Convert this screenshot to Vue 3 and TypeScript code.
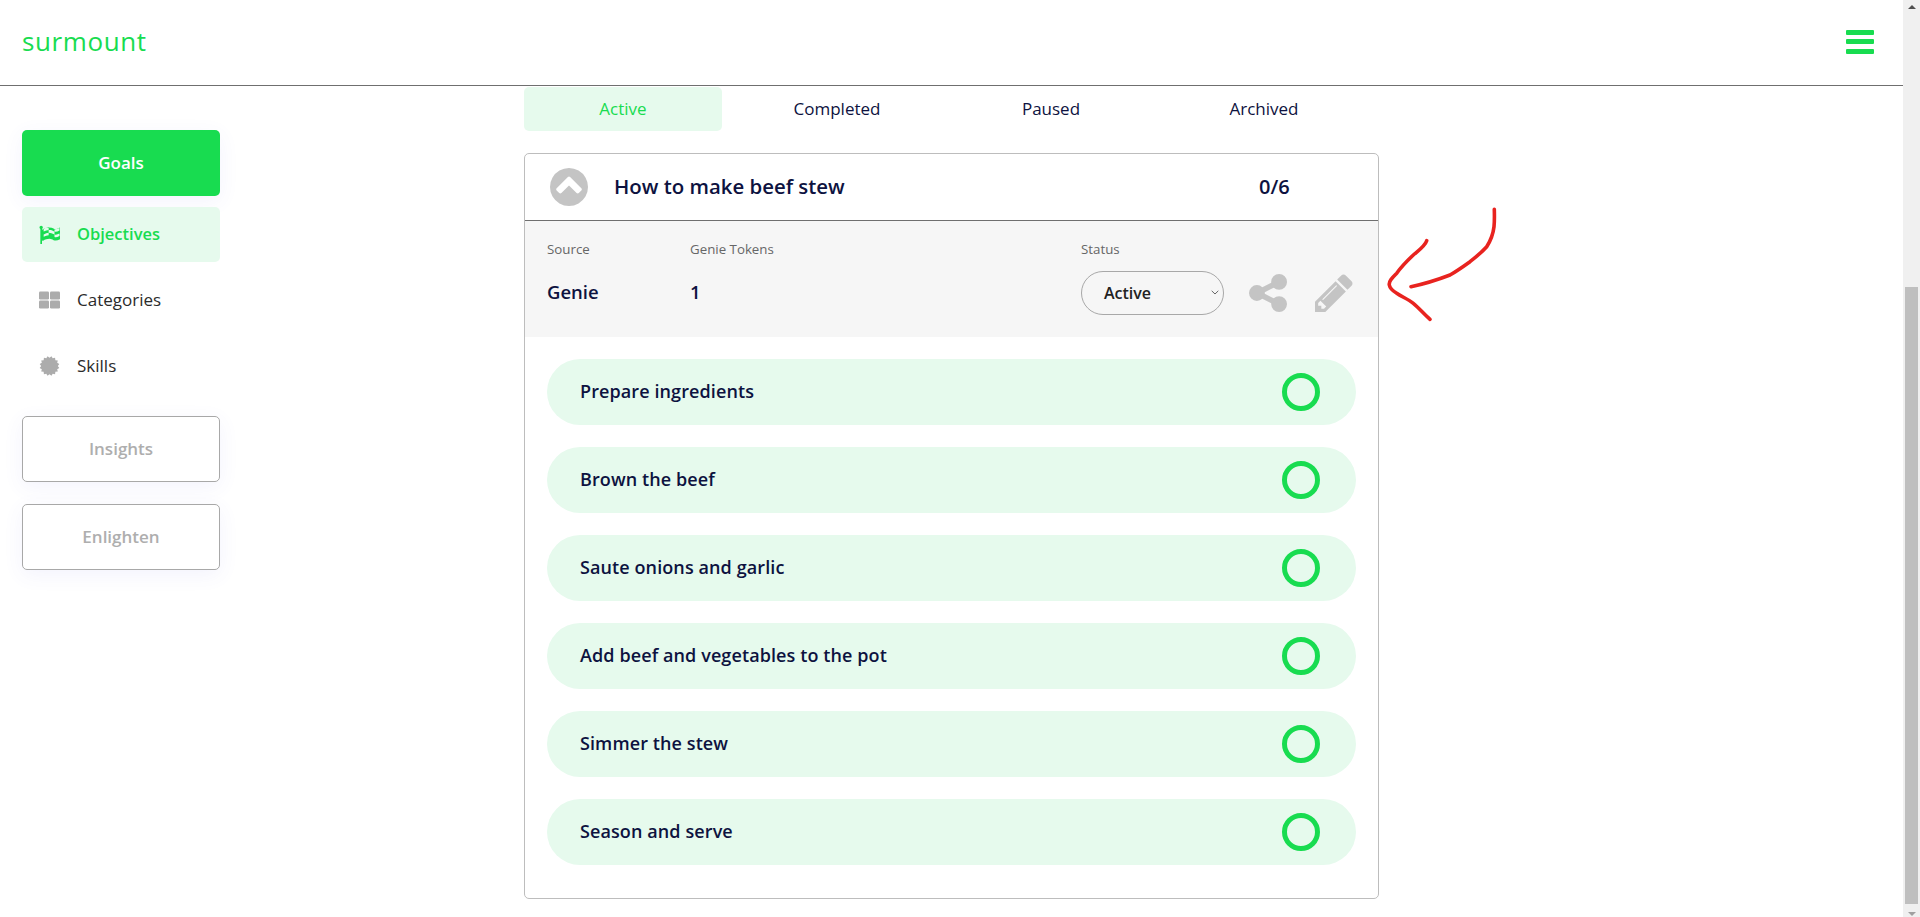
<template>
  <div class="page">
    <div class="content">
      <header class="topbar">
        <span class="logo">surmount</span>
        <div class="burger"><i></i><i></i><i></i></div>
      </header>
      <div class="body">
        <nav class="sidebar">
          <div class="nav-btn nav-solid">Goals</div>
          <div class="nav-item nav-item-active">
            <svg class="nav-icon" viewBox="128 128 1536 1536">
              <path d="M832 1000v-192q-181 16-384 117v185q205-96 384-110zm0-418v-197q-172 8-384 126v189q215-111 384-118zm832 463v-184q-235 116-384 71v-224q-20-6-39-15-5-3-33-17t-34.5-17-31.5-15-34.5-15.5-32.5-13-36-12.5-35-8.5-39.5-7.5-39.5-4-44-2q-23 0-49 3v222h19q102 0 192.5 29t197.5 82q19 9 39 15v188q42 17 91 17 120 0 293-92zm0-427v-189q-169 91-306 91-45 0-78-8v196q148 42 384-90zm-1280-224q0 35-17 64t-47 47v1266q0 14-9 23t-23 9h-64q-14 0-23-9t-9-23v-1266q-30-18-47-47t-17-64q0-53 37.5-90.5t90.5-37.5 90.5 37.5 37.5 90.5zm1408 64v763q0 39-35 57-10 5-17 9-218 116-369 116-88 0-158-35l-28-14q-64-33-99-48t-91-29-114-14q-102 0-235.5 44t-228.5 102q-15 9-33 9-16 0-32-8-32-19-32-56v-742q0-35 31-55 35-21 78.5-42.5t114-52 152.5-49.5 155-19q112 0 209 31t209 86q38 19 89 19 122 0 310-112 22-12 31-17 31-16 62 2 31 20 31 55z" />
            </svg>
            <span>Objectives</span>
          </div>
          <div class="nav-item">
            <svg class="nav-icon" viewBox="0 0 21 17">
              <rect x="0" y="0" width="10" height="8" rx="1.2" />
              <rect x="11" y="0" width="10" height="8" rx="1.2" />
              <rect x="0" y="9" width="10" height="8" rx="1.2" />
              <rect x="11" y="9" width="10" height="8" rx="1.2" />
            </svg>
            <span>Categories</span>
          </div>
          <div class="nav-item nav-item-last">
            <svg class="nav-icon" viewBox="0 0 20 20">
              <polygon :points="badge" />
            </svg>
            <span>Skills</span>
          </div>
          <div class="nav-btn nav-outline">Insights</div>
          <div class="nav-btn nav-outline">Enlighten</div>
        </nav>

        <main class="main">
          <div class="tabs">
            <div v-for="(tab, i) in tabs" :key="tab" class="tab" :class="{ 'tab-active': i === 0 }">{{ tab }}</div>
          </div>

          <section class="card">
            <div class="card-head">
              <svg class="collapse" viewBox="128 128 1536 1536">
                <path d="M1293 1139l102-102q19-19 19-45t-19-45l-454-454q-19-19-45-19t-45 19l-454 454q-19 19-19 45t19 45l102 102q19 19 45 19t45-19l307-307 307 307q19 19 45 19t45-19zm371-243q0 209-103 385.5t-279.5 279.5-385.5 103-385.5-103-279.5-279.5-103-385.5 103-385.5 279.5-279.5 385.5-103 385.5 103 279.5 279.5 103 385.5z" />
              </svg>
              <h2 class="goal-title">How to make beef stew</h2>
              <span class="goal-count">0/6</span>
            </div>

            <div class="meta">
              <div class="meta-col meta-source">
                <span class="meta-label">Source</span>
                <span class="meta-value">Genie</span>
              </div>
              <div class="meta-col meta-tokens">
                <span class="meta-label">Genie Tokens</span>
                <span class="meta-value">1</span>
              </div>
              <div class="meta-col meta-status">
                <span class="meta-label">Status</span>
                <div class="select">
                  <span>Active</span>
                  <svg class="select-caret" viewBox="0 0 8 5"><path d="M.7.8 4 4l3.3-3.2" fill="none" stroke="#666" stroke-width="1" /></svg>
                </div>
              </div>
              <svg class="act-icon share" viewBox="128 128 1536 1536">
                <path d="M1344 1024q133 0 226.5 93.5t93.5 226.5-93.5 226.5-226.5 93.5-226.5-93.5-93.5-226.5q0-12 2-34l-360-180q-92 86-218 86-133 0-226.5-93.5t-93.5-226.5 93.5-226.5 226.5-93.5q126 0 218 86l360-180q-2-22-2-34 0-133 93.5-226.5t226.5-93.5 226.5 93.5 93.5 226.5-93.5 226.5-226.5 93.5q-126 0-218-86l-360 180q2 22 2 34t-2 34l360 180q92-86 218-86z" />
              </svg>
              <svg class="act-icon" viewBox="128 128 1536 1536">
                <path d="M491 1536l91-91-235-235-91 91v107h128v128h107zm523-928q0-22-22-22-10 0-17 7l-542 542q-7 7-7 17 0 22 22 22 10 0 17-7l542-542q7-7 7-17zm-54-192l416 416-832 832h-416v-416zm683 96q0 53-37 90l-166 166-416-416 166-165q36-38 90-38 53 0 91 38l235 234q37 39 37 91z" />
              </svg>
            </div>

            <ul class="steps">
              <li v-for="step in steps" :key="step" class="step">
                <span class="step-text">{{ step }}</span>
                <span class="step-ring"></span>
              </li>
            </ul>
          </section>
        </main>
      </div>
    </div>

    <div class="scrollbar">
      <span class="sb-arrow sb-up"></span>
      <div class="sb-track"><div class="sb-thumb"></div></div>
      <span class="sb-arrow sb-down"></span>
    </div>

    <!-- hand-drawn annotation on top of the screenshot -->
    <svg class="scribble" viewBox="0 0 108 116">
      <path d="M105.3 1.3C105.5 8 105.6 13 105 18.7 104 27 102 32 97.7 38.7 92 45 87 49 81 53.7 75 58 68 63 61 67 48 72 35 76 22 78.7" />
      <path d="M37.7 32.7C36 38 30 42 24.3 47 18 53 12 59 7.7 65.3 4 69 -.5 73 .3 77 1 81 4 83 7.7 85.3 13 89 19 91 24.3 95.3 30 100 35 106 41 111.3" />
    </svg>
  </div>
</template>

<script setup lang="ts">
const tabs = ['Active', 'Completed', 'Paused', 'Archived'];

const steps = [
  'Prepare ingredients',
  'Brown the beef',
  'Saute onions and garlic',
  'Add beef and vegetables to the pot',
  'Simmer the stew',
  'Season and serve',
];

// certificate badge: a small serrated disc
const badge = Array.from({ length: 32 }, (_, i) => {
  const r = i % 2 ? 10 : 8.3;
  const a = (i / 32) * Math.PI * 2;
  return `${(10 + r * Math.cos(a)).toFixed(2)},${(10 + r * Math.sin(a)).toFixed(2)}`;
}).join(' ');
</script>

<style>
html,
body {
  margin: 0;
  height: 100%;
  overflow: hidden;
  background: #fff;
}
</style>

<style scoped>
.page {
  position: relative;
  display: flex;
  height: 917px;
  font-family: "Open Sans", "Noto Sans", sans-serif;
  color: #0d1240;
  overflow: hidden;
}

.content {
  flex: 1;
  min-width: 0;
}

/* Top bar */
.topbar {
  height: 83px;
  border-bottom: 1px solid #6f6f6f;
  display: flex;
  align-items: center;
  justify-content: space-between;
  padding: 0 29px 2px 22px;
}

.logo {
  font-size: 26px;
  letter-spacing: 0.6px;
  color: #18dc50;
  margin-bottom: 2px;
}

.burger {
  width: 28px;
  display: flex;
  flex-direction: column;
  gap: 4.5px;
}

.burger i {
  display: block;
  height: 5px;
  border-radius: 1px;
  background: #18dc50;
}

.body {
  display: flex;
}

/* Sidebar */
.sidebar {
  width: 198px;
  margin-left: 22px;
  padding-top: 44px;
  display: flex;
  flex-direction: column;
}

.nav-btn {
  height: 66px;
  box-sizing: border-box;
  padding-bottom: 2px;
  border-radius: 5px;
  display: flex;
  align-items: center;
  justify-content: center;
  font-size: 17px;
  font-weight: 600;
  box-shadow: 0 5px 20px rgba(90, 90, 220, 0.07);
}

.nav-solid {
  background: #18dc50;
  color: #fff;
  margin-bottom: 11px;
}

.nav-outline {
  border: 1px solid #a8a8a8;
  color: #aeaeae;
  margin-bottom: 22px;
}

.nav-item {
  height: 55px;
  margin-bottom: 11px;
  border-radius: 5px;
  padding: 0 0 2px 17px;
  box-sizing: border-box;
  display: flex;
  align-items: center;
  font-size: 17px;
  color: #2b2b2b;
}

.nav-item-last {
  margin-bottom: 22px;
}

.nav-item-active {
  background: #e6faed;
  color: #18dc50;
  font-size: 16.5px;
  font-weight: 600;
}

.nav-icon {
  width: 21px;
  height: 20px;
  margin-right: 17px;
  fill: #acacac;
  flex: none;
}

.nav-item-active .nav-icon {
  fill: #18dc50;
}

/* Main column */
.main {
  margin-left: 304px;
  width: 855px;
  padding-top: 1px;
}

.tabs {
  display: grid;
  grid-template-columns: 198px 230px 198px 228px;
  margin-bottom: 22px;
}

.tab {
  height: 44px;
  box-sizing: border-box;
  padding-bottom: 2px;
  border-radius: 5px;
  display: flex;
  align-items: center;
  justify-content: center;
  font-size: 17px;
  font-weight: 500;
}

.tab-active {
  background: #e6faed;
  color: #18dc50;
}

.card {
  border: 1px solid #bdbdbd;
  border-radius: 5px;
  box-sizing: border-box;
  height: 746px;
}

.card-head {
  height: 65px;
  border-bottom: 1px solid #6f6f6f;
  display: flex;
  align-items: center;
  padding: 0 0 1px 25px;
}

.collapse {
  width: 38px;
  height: 38px;
  flex: none;
  fill: #c4c4c4;
}

.goal-title {
  margin: 0 0 1px 26px;
  width: 645px;
  font-size: 20.4px;
  font-weight: 600;
}

.goal-count {
  font-size: 20px;
  font-weight: 600;
}

.meta {
  height: 116px;
  background: #f6f6f6;
  display: flex;
  padding: 19px 0 0 22px;
  box-sizing: border-box;
}

.meta-col {
  display: flex;
  flex-direction: column;
}

.meta-source {
  width: 143px;
}

.meta-tokens {
  width: 391px;
}

.meta-status {
  width: 168px;
}

.meta-label {
  font-size: 13.3px;
  line-height: 18px;
  color: #666;
}

.meta-value {
  margin-top: 22px;
  font-size: 18.5px;
  line-height: 24px;
  font-weight: 600;
}

.select {
  margin-top: 13px;
  width: 143px;
  height: 44px;
  box-sizing: border-box;
  border: 1px solid #a8a8a8;
  border-radius: 22px;
  display: flex;
  align-items: center;
  justify-content: space-between;
  padding: 0 4px 1px 22px;
  font-size: 16px;
  font-weight: 600;
  color: #222;
}

.select-caret {
  width: 8px;
  height: 5px;
}

.act-icon {
  flex: none;
  width: 38px;
  height: 38px;
  fill: #c4c4c4;
  margin-top: 34px;
}

.share {
  margin-right: 28px;
}

/* Steps */
.steps {
  list-style: none;
  margin: 0;
  padding: 22px 22px 0;
  display: flex;
  flex-direction: column;
  gap: 22px;
}

.step {
  height: 66px;
  border-radius: 33px;
  background: #e6faed;
  display: flex;
  align-items: center;
  justify-content: space-between;
  padding: 0 36px 0 33px;
  font-size: 18px;
  letter-spacing: 0.1px;
  font-weight: 600;
}

.step-text {
  margin-bottom: 2px;
}

.step-ring {
  width: 38px;
  height: 38px;
  box-sizing: border-box;
  border: 5px solid #18dc50;
  border-radius: 50%;
}

/* Faux classic scrollbar */
.scrollbar {
  flex: none;
  width: 17px;
  height: 917px;
  background: #f0f0f0;
  display: flex;
  flex-direction: column;
  align-items: center;
}

.sb-track {
  flex: 1;
  width: 100%;
  padding-top: 270px;
  box-sizing: border-box;
}

.sb-thumb {
  height: 617px;
  margin: 0 2px;
  background: #bfbfbf;
}

.sb-arrow {
  flex: none;
  width: 0;
  height: 4px;
  border-left: 4px solid transparent;
  border-right: 4px solid transparent;
  box-sizing: border-box;
  margin: 5px 0 8px;
}

.sb-up {
  border-bottom: 4px solid #505050;
}

.sb-down {
  border-top: 4px solid #a0a0a0;
  margin: 8px 0 5px;
}

.scribble {
  position: absolute;
  left: 1389px;
  top: 208px;
  width: 108px;
  height: 116px;
  overflow: visible;
  fill: none;
  stroke: #e8231f;
  stroke-width: 3.6;
  stroke-linecap: round;
  stroke-linejoin: round;
}
</style>
